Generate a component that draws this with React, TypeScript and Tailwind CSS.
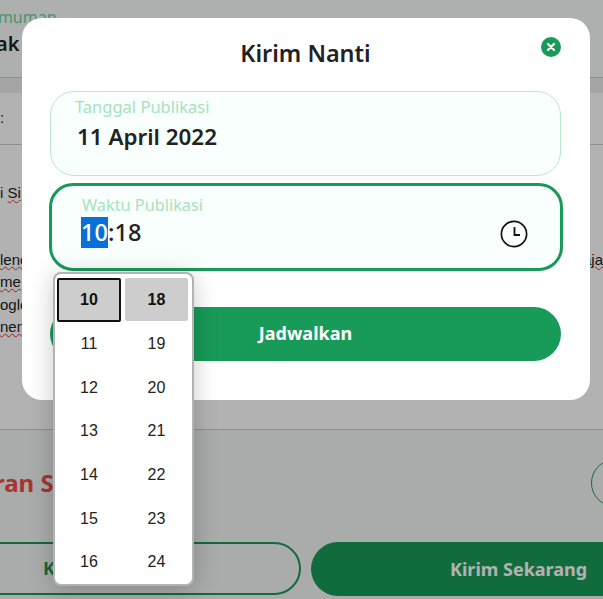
const nunito = { fontFamily: '"Noto Sans", sans-serif' };
const arial = { fontFamily: '"Liberation Sans", sans-serif' };

function Hour({ h, m, first }: { h: string; m: string; first?: boolean }) {
  if (first) {
    return (
      <div className="flex gap-[4px] h-[44px] font-bold text-[16px] text-[#111]">
        <div className="w-[64px] h-[44px] flex items-center justify-center bg-[#cdcdcd] border-2 border-[#111] rounded-[2px]">{h}</div>
        <div className="w-[63px] h-[43px] flex items-center justify-center bg-[#cdcdcd] rounded-[2px]">{m}</div>
      </div>
    );
  }
  return (
    <div className="flex gap-[4px] h-[43.6px] pt-px items-center text-[16px] text-[#222]">
      <div className="w-[64px] text-center">{h}</div>
      <div className="w-[63px] text-center">{m}</div>
    </div>
  );
}

function Clock() {
  return (
    <svg width="28" height="28" viewBox="0 0 28 28" fill="none" stroke="#111">
      <circle cx="14" cy="14" r="12.6" strokeWidth="1.7" />
      <path d="M14.5 7V15H20" strokeWidth="1.8" />
    </svg>
  );
}

function Wavy({ children }: { children: string }) {
  return <span className="underline decoration-wavy decoration-[#e03030] decoration-1">{children}</span>;
}

function Background() {
  return (
    <div className="absolute inset-0 bg-white overflow-hidden flex flex-col" style={nunito}>
      <div className="h-[77px] shrink-0 bg-[#f9fdfb] flex flex-col pt-[7px]">
        <div className="text-[16px] leading-[20px] text-[#6fcf9b] whitespace-nowrap -ml-[12px]">umuman</div>
        <div className="text-[20px] font-semibold text-[#222] leading-[26px] mt-[4px] whitespace-nowrap -ml-[4px]">ak</div>
      </div>
      <div className="h-[16px] shrink-0 bg-[#ececec] border-t border-[#a8dcbc]" />
      <div className="h-[52px] shrink-0 border-b border-[#ccc] flex items-center text-[15px] text-[#222] pb-[1px]" style={arial}>:</div>
      <div className="h-[285px] shrink-0 border-b border-[#ccc] flex flex-col pt-[37px] text-[15px] leading-[22.5px] text-[#222]" style={arial}>
        <div>i <Wavy>Si</Wavy></div>
        <div className="mt-[44px] flex justify-between pr-0">
          <Wavy>lenc</Wavy>
          <Wavy>aja</Wavy>
        </div>
        <div><Wavy>me</Wavy></div>
        <div>ogle</div>
        <div><Wavy>nem</Wavy></div>
      </div>
      <div className="flex-1 bg-[#f2f6f4] flex flex-col overflow-hidden">
        <div className="h-[112px] shrink-0 flex items-center justify-between pb-[6px]">
          <div className="text-[24px] font-bold text-[#f04a4a] leading-none whitespace-nowrap -ml-[6px]">ran Saldo</div>
          <div className="w-[60px] h-[48px] shrink-0 rounded-full border border-[#1e9b5a] -mr-[48px]" />
        </div>
        <div className="flex gap-[10px] -ml-[60px] w-[711px] shrink-0">
          <div className="w-[361px] h-[53px] rounded-full border-2 border-[#1a9958] flex items-center pl-[101px] text-[18px] font-bold text-[#1a9958]">Kirim Nanti</div>
          <div className="w-[340px] h-[54px] rounded-full bg-[#189a58] flex items-center text-[18px] font-bold text-white pl-[139px]">Kirim Sekarang</div>
        </div>
      </div>
    </div>
  );
}

export default function App() {
  return (
    <div className="relative w-[603px] h-[599px] overflow-hidden" style={nunito}>
      <Background />
      <div className="absolute inset-0 bg-[rgba(0,0,0,0.3)]" />
      <div className="absolute left-[22px] top-[18px] w-[568px] h-[382px] bg-white rounded-[20px] flex flex-col px-[28px]">
        <div className="relative h-[73px] shrink-0 flex items-center justify-center">
          <div className="text-[23.4px] font-semibold text-[#222] leading-none -mt-[2px] -ml-[1px]">Kirim Nanti</div>
          <button className="absolute right-[1px] top-[19px] w-[20px] h-[20px] rounded-full bg-[#189a58] flex items-center justify-center">
            <svg width="10" height="10" viewBox="0 0 10 10" stroke="#fff" strokeWidth="2.2" strokeLinecap="round"><path d="M2 2L8 8M8 2L2 8" /></svg>
          </button>
        </div>
        <div className="w-[511px] h-[85px] shrink-0 rounded-[24px] border border-[#b9e8cd] bg-[#f8fffc] pl-[24px] pt-[5px]">
          <div className="text-[16.5px] leading-[20px] text-[#a6e2c0]">Tanggal Publikasi</div>
          <div className="text-[22.4px] font-semibold leading-[30px] text-[#222] mt-[5px] ml-[2px]">11 April 2022</div>
        </div>
        <div className="relative w-[514px] -ml-[1px] mt-[7px] h-[88px] shrink-0 rounded-[24px] border-[3px] border-[#189a58] bg-[#f8fffc] pl-[29px] pt-[9px]">
          <div className="text-[16.3px] leading-[20px] text-[#a6e2c0] ml-[1px]">Waktu Publikasi</div>
          <div className="text-[23.6px] font-medium leading-[31px] text-[#222] mt-[2px]"><span className="bg-[#0a6fd6] text-white inline-block h-[31px]">10</span>:18</div>
          <div className="absolute right-[32px] top-[34px]"><Clock /></div>
        </div>
        <button className="w-[511px] mt-[36px] h-[54px] shrink-0 rounded-full bg-[#189a58] flex items-center justify-center text-white text-[18px] font-bold pb-[2px]">Jadwalkan</button>
      </div>
      <div className="absolute left-[53px] top-[272px] w-[141px] h-[314px] bg-white rounded-[8px] border-2 border-[#b3b3b3] pl-[2px] pt-[4px] shadow-[0_4px_24px_rgba(0,0,0,0.22)] flex flex-col" style={arial}>
        <Hour h="10" m="18" first />
        {[["11","19"],["12","20"],["13","21"],["14","22"],["15","23"],["16","24"]].map(([h,m]) => <Hour key={h} h={h} m={m} />)}
      </div>
    </div>
  );
}
